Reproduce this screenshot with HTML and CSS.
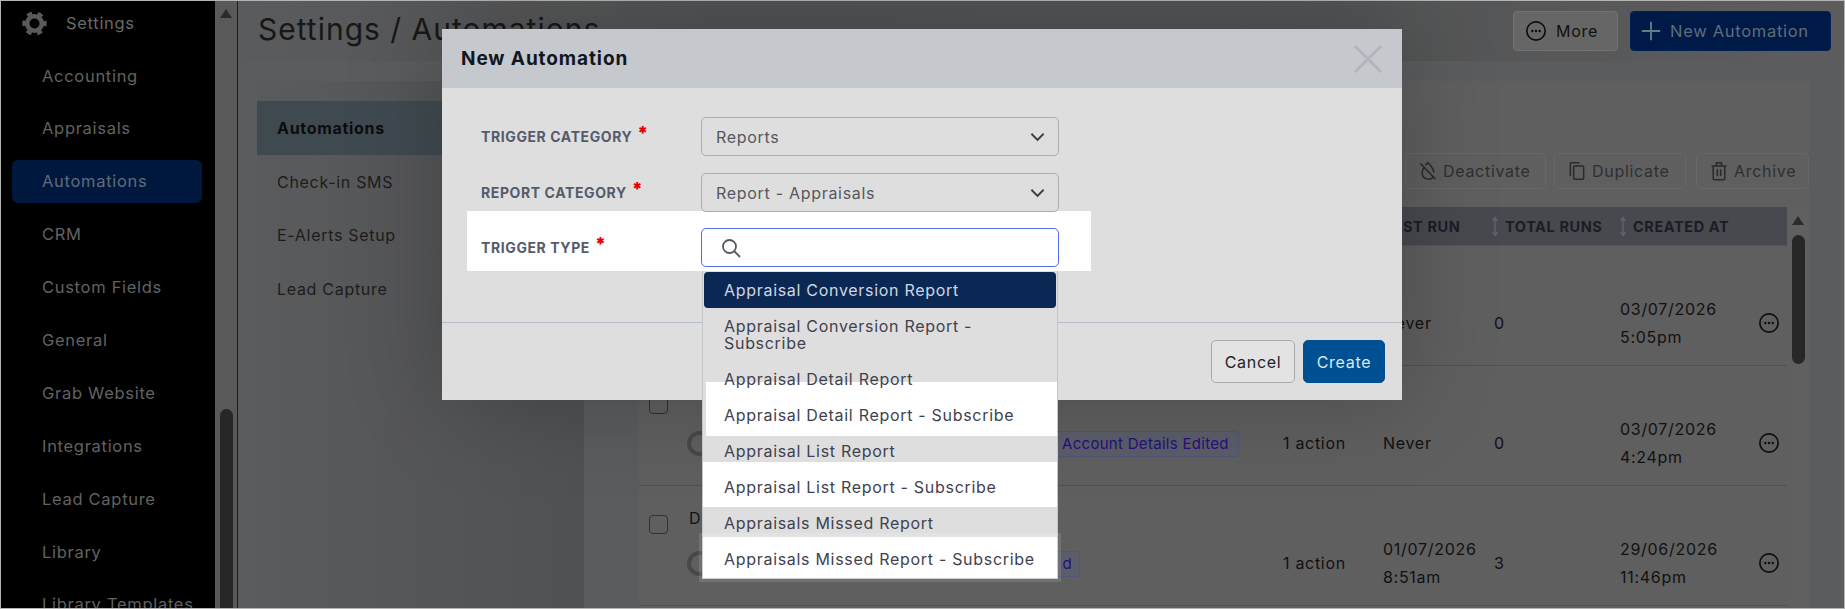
FILE: index.html
```html
<!DOCTYPE html>
<html lang="en">
<head>
    <meta charset="UTF-8">
    <meta name="viewport" content="width=device-width, initial-scale=1.0">
    <title>Settings / Automations</title>
    <link rel="stylesheet" href="styles.css">
</head>
<body>
    <div class="frame">
        <div class="sidebar">
            <div class="side-head">
                <svg class="gear" viewBox="0 0 24 24"><circle class="gear-teeth" cx="12" cy="12" r="10" transform="rotate(-14 12 12)"/><circle class="gear-ring" cx="12" cy="12" r="7"/></svg>
                <span>Settings</span>
            </div>
            <a href="#">Accounting</a>
            <a href="#">Appraisals</a>
            <a href="#" class="active">Automations</a>
            <a href="#">CRM</a>
            <a href="#">Custom Fields</a>
            <a href="#">General</a>
            <a href="#">Grab Website</a>
            <a href="#">Integrations</a>
            <a href="#">Lead Capture</a>
            <a href="#">Library</a>
            <a href="#">Library Templates</a>
        </div>
        <div class="side-scroll">
            <div class="arrow-up"></div>
            <div class="thumb side-thumb"></div>
        </div>

        <div class="main">
            <div class="header">
                <h1>Settings / Automations</h1>
                <div class="header-actions">
                    <button class="btn-more">
                        <svg class="dots-icon" viewBox="0 0 24 24"><circle cx="12" cy="12" r="10"/><circle class="dot" cx="8" cy="12" r="1.3"/><circle class="dot" cx="12" cy="12" r="1.3"/><circle class="dot" cx="16" cy="12" r="1.3"/></svg>
                        More
                    </button>
                    <button class="btn-new">
                        <svg class="plus-icon" viewBox="0 0 24 24"><path d="M12 2v20M2 12h20"/></svg>
                        New Automation
                    </button>
                </div>
            </div>

            <div class="page">
                <div class="subnav">
                    <a href="#" class="active">Automations</a>
                    <a href="#">Check-in SMS</a>
                    <a href="#">E-Alerts Setup</a>
                    <a href="#">Lead Capture</a>
                </div>

                <div class="content">
                    <div class="toolbar">
                        <button class="tool-deactivate">
                            <svg class="tool-icon" viewBox="0 0 24 24"><path d="M9 5l3-3c3 3 7 8 7 12M19 18a7.5 7.5 0 0 1-14-4c0-2 .8-4 2-5.5M3 3l18 19"/></svg>
                            Deactivate
                        </button>
                        <button class="tool-duplicate">
                            <svg class="tool-icon" viewBox="0 0 24 24"><rect x="8" y="6" width="12" height="16" rx="1.5"/><path d="M4 18V3a1 1 0 0 1 1-1h10"/></svg>
                            Duplicate
                        </button>
                        <button class="tool-archive">
                            <svg class="tool-icon" viewBox="0 0 24 24"><path d="M3 6h18M9 6V2h6v4M5 6v15a1.5 1.5 0 0 0 1.5 1.5h11A1.5 1.5 0 0 0 19 21V6M10 10v8M14 10v8"/></svg>
                            Archive
                        </button>
                    </div>

                    <div class="table-wrap">
                        <div class="table">
                            <div class="row head">
                                <span></span>
                                <span></span>
                                <span></span>
                                <span>LAST RUN</span>
                                <span class="sort sort-runs">
                                    <svg class="sort-icon" viewBox="0 0 10 26"><path d="M5 2v22M2 6l3-4 3 4M2 20l3 4 3-4"/></svg>
                                    TOTAL RUNS
                                </span>
                                <span class="sort sort-created">
                                    <svg class="sort-icon" viewBox="0 0 10 26"><path d="M5 2v22M2 6l3-4 3 4M2 20l3 4 3-4"/></svg>
                                    CREATED AT
                                </span>
                                <span></span>
                            </div>

                            <div class="row">
                                <span class="check"></span>
                                <div class="name"></div>
                                <span></span>
                                <span>Never</span>
                                <span>0</span>
                                <span class="date">03/07/2026<br>5:05pm</span>
                                <svg class="dots-icon" viewBox="0 0 24 24"><circle cx="12" cy="12" r="10"/><circle class="dot" cx="8" cy="12" r="1.3"/><circle class="dot" cx="12" cy="12" r="1.3"/><circle class="dot" cx="16" cy="12" r="1.3"/></svg>
                            </div>

                            <div class="row">
                                <span class="check"></span>
                                <div class="name"><div class="name-title"></div><div class="name-sub"><span class="toggle"></span><span class="badge badge-long">Account Details Edited</span></div></div>
                                <span>1 action</span>
                                <span>Never</span>
                                <span>0</span>
                                <span class="date">03/07/2026<br>4:24pm</span>
                                <svg class="dots-icon" viewBox="0 0 24 24"><circle cx="12" cy="12" r="10"/><circle class="dot" cx="8" cy="12" r="1.3"/><circle class="dot" cx="12" cy="12" r="1.3"/><circle class="dot" cx="16" cy="12" r="1.3"/></svg>
                            </div>

                            <div class="row">
                                <span class="check"></span>
                                <div class="name"><div class="name-title">D</div><div class="name-sub"><span class="toggle"></span><span class="badge badge-short">d</span></div></div>
                                <span>1 action</span>
                                <span class="date">01/07/2026<br>8:51am</span>
                                <span>3</span>
                                <span class="date">29/06/2026<br>11:46pm</span>
                                <svg class="dots-icon" viewBox="0 0 24 24"><circle cx="12" cy="12" r="10"/><circle class="dot" cx="8" cy="12" r="1.3"/><circle class="dot" cx="12" cy="12" r="1.3"/><circle class="dot" cx="16" cy="12" r="1.3"/></svg>
                            </div>
                        </div>
                        <div class="table-scroll">
                            <div class="arrow-up"></div>
                            <div class="thumb table-thumb"></div>
                        </div>
                    </div>
                </div>
            </div>
        </div>
    </div>

    <div class="modal">
        <div class="modal-head">
            <h3>New Automation</h3>
            <svg class="close-icon" viewBox="0 0 30 30"><path d="M2 2l26 26M28 2L2 28"/></svg>
        </div>
        <div class="modal-body">
            <div class="form-row">
                <label>TRIGGER CATEGORY <b>*</b></label>
                <div class="select">Reports
                    <svg class="chevron" viewBox="0 0 16 10"><path d="M1.5 1.5L8 8l6.5-6.5"/></svg>
                </div>
            </div>
            <div class="form-row">
                <label>REPORT CATEGORY <b>*</b></label>
                <div class="select">Report - Appraisals
                    <svg class="chevron" viewBox="0 0 16 10"><path d="M1.5 1.5L8 8l6.5-6.5"/></svg>
                </div>
            </div>
            <div class="form-row lit">
                <label>TRIGGER TYPE <b>*</b></label>
                <div class="select search">
                    <svg class="search-icon" viewBox="0 0 20 20"><circle cx="8.5" cy="8.5" r="6.5"/><path d="M13.5 13.5L19 19"/></svg>
                </div>
            </div>
        </div>
        <div class="modal-foot">
            <button class="btn-cancel">Cancel</button>
            <button class="btn-create">Create</button>
        </div>

        <div class="dropdown">
            <div class="patch patch-a"></div>
            <div class="patch patch-b"></div>
            <div class="patch patch-c"></div>
            <div class="option selected">Appraisal Conversion Report</div>
            <div class="option two-line">Appraisal Conversion Report - Subscribe</div>
            <div class="option">Appraisal Detail Report</div>
            <div class="option">Appraisal Detail Report - Subscribe</div>
            <div class="option">Appraisal List Report</div>
            <div class="option">Appraisal List Report - Subscribe</div>
            <div class="option">Appraisals Missed Report</div>
            <div class="option">Appraisals Missed Report - Subscribe</div>
        </div>
    </div>
</body>
</html>
```

FILE: styles.css
```css
* {
    box-sizing: border-box;
}
body {
    font-family: Inter, "Noto Sans", sans-serif;
    font-size: 16px;
    letter-spacing: 0.7px;
    margin: 0;
    padding: 0;
    width: 1845px;
    height: 609px;
    overflow: hidden;
    position: relative;
    background: #5c5d5e;
}
button {
    font: inherit;
    letter-spacing: inherit;
}
.frame {
    display: flex;
    height: 609px;
    border: 1px solid #b4b4b4;
    overflow: hidden;
}

/* left menu */
.sidebar {
    width: 214px;
    flex-shrink: 0;
    background: #000;
    color: #626262;
    font-size: 16.5px;
    overflow: hidden;
}
.side-head {
    display: flex;
    align-items: center;
    gap: 19px;
    height: 44px;
    padding-left: 21px;
    margin-bottom: 9px;
    color: #6a6a6a;
}
.gear {
    width: 25px;
    height: 25px;
    fill: none;
    stroke: #5a5a5a;
}
.gear-teeth {
    stroke-width: 3.4;
    stroke-dasharray: 5 5.47;
}
.gear-ring {
    stroke-width: 4.4;
}
.sidebar a {
    display: flex;
    align-items: center;
    height: 43px;
    margin: 0 13px 9.9px 11px;
    padding-left: 30px;
    border-radius: 6px;
    color: inherit;
    text-decoration: none;
    white-space: nowrap;
}
.sidebar a.active {
    background: #01183e;
    color: #5f6b7c;
}
.side-scroll {
    width: 23px;
    flex-shrink: 0;
    background: #595959;
    border-right: 1px solid #1e1e1e;
    padding-top: 8px;
}
.arrow-up {
    width: 0;
    height: 0;
    margin: 0 auto;
    border-left: 6px solid transparent;
    border-right: 6px solid transparent;
    border-bottom: 9px solid #2b2b2b;
}
.thumb {
    width: 13px;
    margin: 0 auto;
    border-radius: 7px;
    background: #272727;
}
.side-thumb {
    height: 220px;
    margin-top: 391px;
}

/* page */
.main {
    flex: 1;
    min-width: 0;
}
.header {
    display: flex;
    justify-content: space-between;
    align-items: center;
    height: 60px;
    padding: 0 13px 0 20px;
    background: linear-gradient(90deg, #5a5b5c, #525354 30%, #535455 70%, #5d5d5e);
}
.header h1 {
    margin: -5px 0 0;
    font-size: 30px;
    font-weight: 400;
    letter-spacing: 1px;
    color: #171717;
    white-space: nowrap;
}
.header-actions {
    display: flex;
    gap: 12px;
}
.header-actions button {
    display: flex;
    align-items: center;
    height: 40px;
    border-radius: 4px;
}
.btn-more {
    width: 105px;
    gap: 9px;
    padding-left: 11px;
    background: #666;
    border: 1px solid #727272;
    color: #111;
}
.btn-new {
    width: 201px;
    gap: 8px;
    padding-left: 9px;
    background: #001a47;
    border: 1px solid #02215a;
    color: #5f6c7c;
    font-size: 16.5px;
}
.dots-icon {
    width: 22px;
    height: 22px;
    fill: none;
    stroke: #0d0d0d;
    stroke-width: 1.8;
    flex-shrink: 0;
}
.dots-icon .dot {
    fill: #0d0d0d;
    stroke: none;
}
.plus-icon {
    width: 22px;
    height: 22px;
    fill: none;
    stroke: #5e7f88;
    stroke-width: 2;
}
.page {
    display: flex;
    height: 547px;
    padding: 20px 35px 0 19px;
    background: #5b5c5e;
}
.subnav {
    width: 327px;
    flex-shrink: 0;
    padding-top: 20px;
    background: linear-gradient(90deg, #5a5b5d, #505152);
}
.subnav a {
    display: flex;
    align-items: center;
    height: 53.7px;
    padding-left: 20px;
    color: #1c1c1c;
    text-decoration: none;
}
.subnav a.active {
    background: #3f4a50;
    font-weight: 700;
    color: #0c0c0c;
}

/* list of automations */
.content {
    flex: 1;
    min-width: 0;
    margin-left: 55px;
    padding-top: 72px;
    background: #5f5f60;
}
.toolbar {
    display: flex;
    justify-content: flex-end;
    height: 36px;
}
.toolbar button {
    display: flex;
    align-items: center;
    gap: 5px;
    padding: 0 0 0 12px;
    background: transparent;
    border: 1px solid #686868;
    border-radius: 5px;
    color: #2e2f32;
}
.tool-deactivate {
    width: 141px;
}
.tool-duplicate {
    width: 132px;
    margin: 0 10px 0 8px;
}
.tool-archive {
    width: 113px;
}
.tool-icon {
    width: 20px;
    height: 20px;
    fill: none;
    stroke: #2a2a2c;
    stroke-width: 1.8;
}
.table-wrap {
    display: flex;
    margin-top: 18px;
}
.table {
    flex: 1;
    min-width: 0;
}
.row {
    display: grid;
    grid-template-columns: 40px 594px 100px 111px 126px 138px 27px;
    align-items: center;
    height: 120px;
    padding: 34px 0 0 10px;
    border-bottom: 1px solid #515151;
    color: #111;
}
.row.head {
    height: 39px;
    padding-top: 0;
    background: #47494e;
    border-bottom: 1px solid #53555a;
    color: #1a1c26;
    font-size: 14.5px;
    font-weight: 700;
    letter-spacing: 0.6px;
    white-space: nowrap;
}
.sort {
    display: flex;
    align-items: center;
    gap: 6px;
}
.sort-runs {
    margin-left: -3px;
}
.sort-created {
    margin-left: -1px;
}
.sort-icon {
    width: 8px;
    height: 25px;
    fill: none;
    stroke: #5b6170;
    stroke-width: 2;
    flex-shrink: 0;
}
.check {
    align-self: start;
    width: 19px;
    height: 19px;
    margin-top: -5px;
    border: 1px solid #2f3040;
    border-radius: 4px;
}
.name {
    align-self: start;
    margin-top: -11px;
}
.name-title {
    height: 19px;
    line-height: 19px;
}
.name-sub {
    display: flex;
    align-items: center;
    height: 27px;
    margin: 22px 0 0 -2px;
}
.toggle {
    width: 25px;
    height: 25px;
    flex-shrink: 0;
    border: 4px solid #484848;
    border-radius: 50%;
}
.badge {
    display: flex;
    align-items: center;
    height: 26px;
    background: #5b5e6a;
    border: 1px solid #4d5674;
    border-radius: 4px;
    color: #25107a;
    font-size: 15px;
    letter-spacing: 0.3px;
}
.badge-long {
    width: 194px;
    margin-left: 333px;
    padding-left: 16px;
}
.badge-short {
    justify-content: flex-end;
    width: 150px;
    margin-left: 218px;
    padding-right: 7px;
}
.date {
    line-height: 28px;
}
.table-scroll {
    width: 22px;
    flex-shrink: 0;
    padding-top: 9px;
    background: #606060;
}
.table-thumb {
    height: 129px;
    margin-top: 10px;
}

/* dialog */
.modal {
    position: absolute;
    top: 29px;
    left: 442px;
    display: flex;
    flex-direction: column;
    width: 960px;
    height: 371px;
    background: #dedede;
    box-shadow: 0 0 90px rgba(0, 0, 0, 0.22);
    color: #40434e;
}
.modal-head {
    display: flex;
    justify-content: space-between;
    align-items: center;
    height: 59px;
    padding: 0 19px;
    background: #c5c8cd;
}
.modal-head h3 {
    margin: 0;
    font-size: 19px;
    font-weight: 700;
    letter-spacing: 0.9px;
    color: #111722;
}
.close-icon {
    width: 30px;
    height: 30px;
    fill: none;
    stroke: #b2b5bc;
    stroke-width: 3;
}
.modal-body {
    height: 235px;
    flex-shrink: 0;
    padding: 29px 0 0 25px;
    border-bottom: 1px solid #b3bcc7;
}
.form-row {
    display: flex;
    align-items: center;
    width: 624px;
    height: 39px;
    margin-bottom: 17px;
    padding-left: 14px;
}
.form-row label {
    width: 220px;
    flex-shrink: 0;
    margin-top: -3px;
    font-size: 14px;
    font-weight: 700;
    letter-spacing: 0.6px;
    color: #555b6b;
}
.form-row b {
    position: relative;
    top: -3px;
    margin-left: 1px;
    font-size: 18px;
    color: #e60000;
}
.select {
    display: flex;
    justify-content: space-between;
    align-items: center;
    width: 358px;
    height: 39px;
    padding: 0 13px 0 14px;
    border: 1px solid #adadad;
    border-radius: 5px;
    color: #55585f;
}
.chevron {
    width: 15px;
    height: 10px;
    fill: none;
    stroke: #3c3c3c;
    stroke-width: 2;
}
.form-row.lit {
    height: 60px;
    margin: -18px 0 0;
    padding-top: 17px;
    padding-bottom: 4px;
    background: #fff;
}
.select.search {
    padding-left: 19px;
    border-color: #4f6ef2;
    background: #fff;
}
.search-icon {
    width: 20px;
    height: 20px;
    fill: none;
    stroke: #55585f;
    stroke-width: 1.8;
}
.modal-foot {
    display: flex;
    justify-content: flex-end;
    gap: 8px;
    padding: 17px 17px 0 0;
}
.modal-foot button {
    height: 43px;
    border-radius: 5px;
}
.btn-cancel {
    width: 84px;
    background: #e3e3e3;
    border: 1px solid #a9a9a9;
    color: #222;
}
.btn-create {
    width: 82px;
    background: #005094;
    border: 1px solid #005094;
    color: #dce6f0;
}

/* trigger type options */
.dropdown {
    position: absolute;
    top: 242px;
    left: 260px;
    width: 356px;
    height: 308px;
    padding: 1px 1px 2px;
    background: #dedede;
    border-left: 1px solid #c2c5cc;
    border-right: 1px solid #c2c5cc;
    border-bottom: 1px solid #c2c5cc;
}
.option {
    position: relative;
    display: flex;
    align-items: center;
    height: 36px;
    padding: 0 20px;
    line-height: 17px;
    color: #3f424e;
}
.option.selected {
    background: #0b2855;
    border-radius: 4px;
    color: #cfd6e0;
}
.option.two-line {
    height: 53px;
}
.patch {
    position: absolute;
    background: #fff;
}
.patch-a {
    top: 111px;
    left: 3px;
    width: 351px;
    height: 54px;
}
.patch-b {
    top: 191px;
    left: 0;
    width: 354px;
    height: 45px;
}
.patch-c {
    top: 266px;
    left: 0;
    width: 354px;
    height: 41px;
    box-shadow: 0 0 0 4px rgba(255, 255, 255, 0.12);
}
```
